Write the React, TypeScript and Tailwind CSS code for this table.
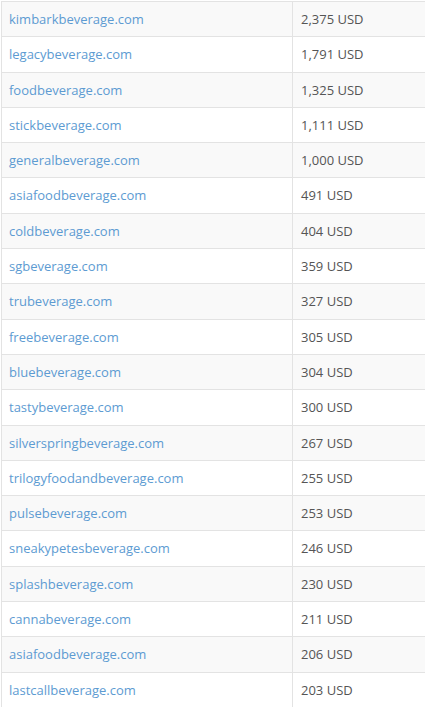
import React from "react";

const rows: [string, string][] = [
  ["kimbarkbeverage.com", "2,375 USD"],
  ["legacybeverage.com", "1,791 USD"],
  ["foodbeverage.com", "1,325 USD"],
  ["stickbeverage.com", "1,111 USD"],
  ["generalbeverage.com", "1,000 USD"],
  ["asiafoodbeverage.com", "491 USD"],
  ["coldbeverage.com", "404 USD"],
  ["sgbeverage.com", "359 USD"],
  ["trubeverage.com", "327 USD"],
  ["freebeverage.com", "305 USD"],
  ["bluebeverage.com", "304 USD"],
  ["tastybeverage.com", "300 USD"],
  ["silverspringbeverage.com", "267 USD"],
  ["trilogyfoodandbeverage.com", "255 USD"],
  ["pulsebeverage.com", "253 USD"],
  ["sneakypetesbeverage.com", "246 USD"],
  ["splashbeverage.com", "230 USD"],
  ["cannabeverage.com", "211 USD"],
  ["asiafoodbeverage.com", "206 USD"],
  ["lastcallbeverage.com", "203 USD"],
];

export default function App() {
  return (
    <div className="w-[425px] h-[707px] overflow-hidden bg-white" style={{ fontFamily: '"Open Sans", sans-serif' }}>
      <table className="mt-[1px] ml-[1px] w-[460px] border-collapse text-[13px] leading-[18.3px]">
        <tbody>
          {rows.map(([d, v], i) => (
            <tr key={i} className={i % 2 === 0 ? "bg-[#f9f9f9]" : "bg-white"}>
              <td className="w-[291px] border border-[#e3e3e3] px-[7px] py-[8px] text-[#5d9bd2]">{d}</td>
              <td className="border border-[#e3e3e3] px-[8px] py-[8px] text-[#555555]">{v}</td>
            </tr>
          ))}
        </tbody>
      </table>
    </div>
  );
}
